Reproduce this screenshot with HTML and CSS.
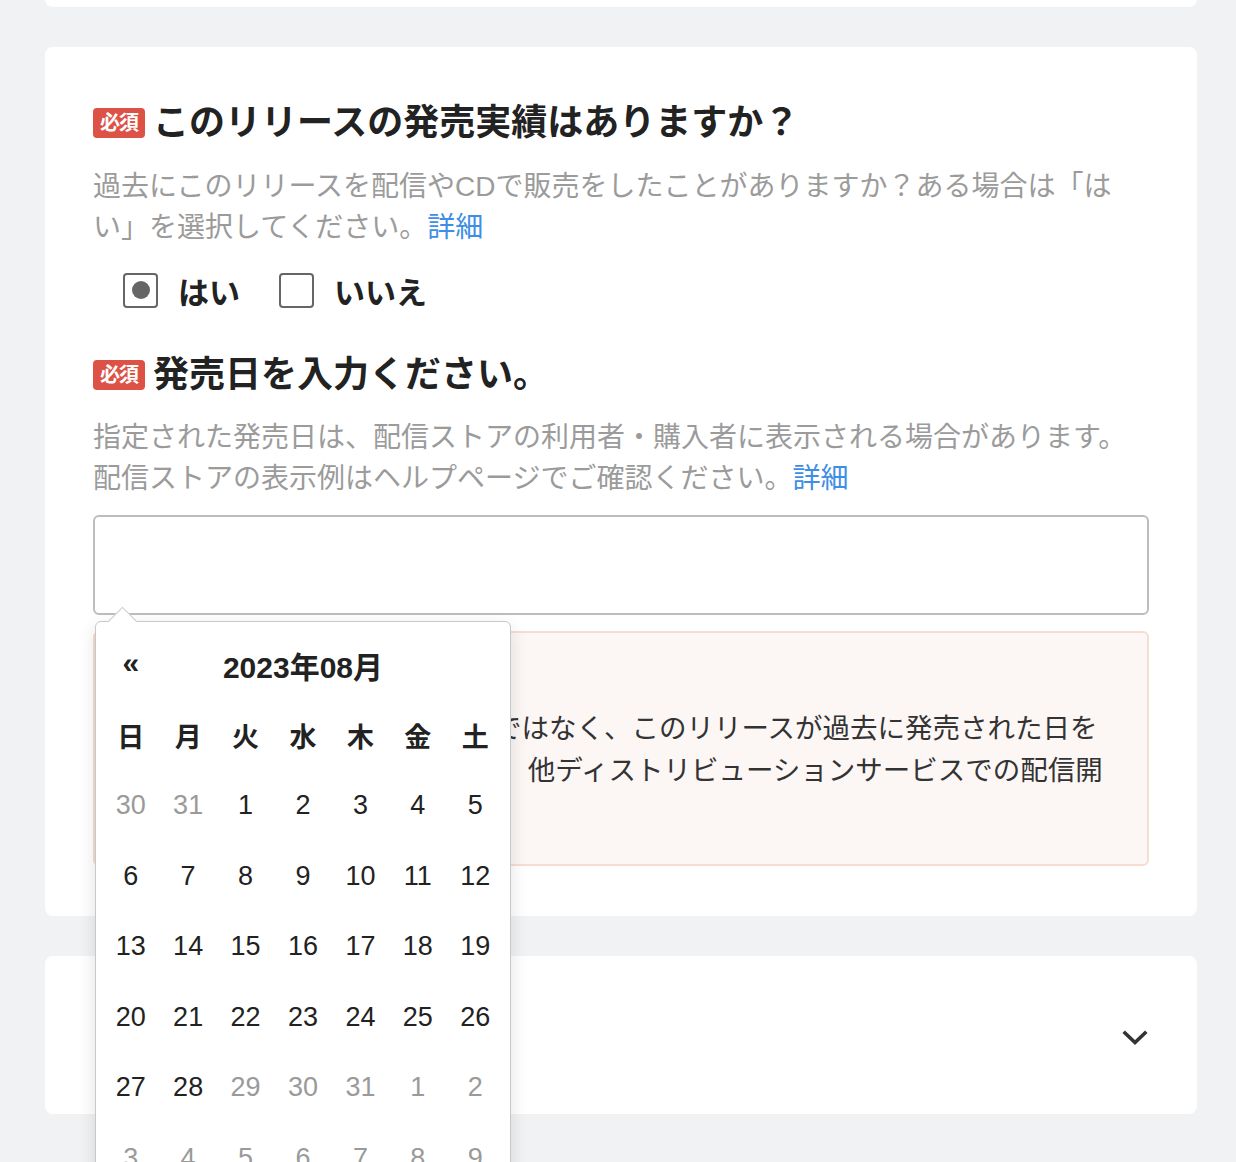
FILE: index.html
```html
<!DOCTYPE html>
<html lang="ja">
<head>
    <meta charset="UTF-8">
    <title>リリース情報</title>
    <link rel="stylesheet" href="styles.css">
</head>
<body>

    <div class="page">
        <div class="card card-prev"></div>

        <!-- 発売実績 -->
        <section class="card form-card">
            <h3 class="field-title"><span class="badge">必須</span>このリリースの発売実績はありますか？</h3>
            <p class="field-desc">過去にこのリリースを配信やCDで販売をしたことがありますか？ある場合は「はい」を選択してください。<a href="#">詳細</a></p>

            <div class="choices">
                <label class="choice"><span class="box checked"></span>はい</label>
                <label class="choice"><span class="box"></span>いいえ</label>
            </div>

            <h3 class="field-title title-date"><span class="badge">必須</span>発売日を入力ください。</h3>
            <p class="field-desc desc-date">指定された発売日は、配信ストアの利用者・購入者に表示される場合があります。<br>配信ストアの表示例はヘルプページでご確認ください。<a href="#">詳細</a></p>

            <div class="date-wrap">
                <input class="date-input" type="text">

                <div class="datepicker">
                    <div class="dp-head">
                        <span class="dp-prev">«</span>
                        <span class="dp-title">2023年08月</span>
                        <span></span>
                    </div>
                    <div class="dp-grid">
                        <span class="dow">日</span><span class="dow">月</span><span class="dow">火</span><span class="dow">水</span><span class="dow">木</span><span class="dow">金</span><span class="dow">土</span>

                        <span class="day old">30</span><span class="day old">31</span><span class="day">1</span><span class="day">2</span><span class="day">3</span><span class="day">4</span><span class="day">5</span>
                        <span class="day">6</span><span class="day">7</span><span class="day">8</span><span class="day">9</span><span class="day">10</span><span class="day">11</span><span class="day">12</span>
                        <span class="day">13</span><span class="day">14</span><span class="day">15</span><span class="day">16</span><span class="day">17</span><span class="day">18</span><span class="day">19</span>
                        <span class="day">20</span><span class="day">21</span><span class="day">22</span><span class="day">23</span><span class="day">24</span><span class="day">25</span><span class="day">26</span>
                        <span class="day">27</span><span class="day">28</span><span class="day old">29</span><span class="day old">30</span><span class="day old">31</span><span class="day old">1</span><span class="day old">2</span>
                        <span class="day old">3</span><span class="day old">4</span><span class="day old">5</span><span class="day old">6</span><span class="day old">7</span><span class="day old">8</span><span class="day old">9</span>
                    </div>
                </div>
            </div>

            <div class="notice">
                <p class="notice-title">ご注意ください</p>
                <p class="notice-text">この欄には配信開始日や予約日ではなく、このリリースが過去に発売された日を正確に入力してください。また、他ディストリビューションサービスでの配信開始日も入力しないでください。</p>
            </div>
        </section>

        <!-- 折りたたみ -->
        <section class="card collapse-card">
            <svg class="chevron" width="26" height="16" viewBox="0 0 26 16">
                <polyline points="3,3 13,12.5 23,3" fill="none" stroke="#333" stroke-width="3.6" stroke-linecap="square"/>
            </svg>
        </section>
    </div>

</body>
</html>
```

FILE: styles.css
```css
/* 全体 */
body {
    margin: 0;
    background-color: #f1f2f4;
    font-family: "Liberation Sans", "Noto Sans CJK JP", sans-serif;
    color: #222;
}

.page {
    width: 1152px;
    margin-left: 45px;
    padding-bottom: 160px;
    display: flex;
    flex-direction: column;
    gap: 40px;
}

/* カード */
.card {
    background-color: #fff;
    border-radius: 8px;
}

.card-prev {
    height: 40px;
    margin-top: -33px;
}

.form-card {
    padding: 60px 48px 50px;
}

/* 見出し */
.field-title {
    display: flex;
    align-items: center;
    height: 32px;
    margin: 0;
    font-size: 36px;
    line-height: 32px;
    font-weight: bold;
    color: #222;
}

.title-date {
    margin-top: 49px;
}

.badge {
    display: inline-flex;
    align-items: center;
    justify-content: center;
    flex-shrink: 0;
    width: 52px;
    height: 30px;
    margin-right: 8px;
    background-color: #dc5247;
    border-radius: 4px;
    color: #fff;
    font-size: 20px;
    line-height: 30px;
    font-weight: bold;
    letter-spacing: -1px;
}

/* 説明文 */
.field-desc {
    margin: 27px 0 0;
    font-size: 28px;
    line-height: 41px;
    color: #9b9b9b;
}

.desc-date {
    margin-top: 26px;
}

.field-desc a {
    color: #3e8ee6;
    text-decoration: none;
}

/* 選択肢 */
.choices {
    display: flex;
    align-items: center;
    gap: 39px;
    height: 40px;
    margin-top: 22px;
    padding-left: 30px;
}

.choice {
    display: flex;
    align-items: center;
    gap: 20px;
    font-size: 31px;
    font-weight: bold;
    color: #222;
}

.box {
    position: relative;
    width: 35px;
    height: 35px;
    box-sizing: border-box;
    border: 2px solid #666;
    border-radius: 4px;
}

.box.checked::after {
    content: "";
    position: absolute;
    left: 6.5px;
    top: 6.5px;
    width: 18px;
    height: 18px;
    border-radius: 50%;
    background-color: #666;
}

/* 日付入力 */
.date-wrap {
    position: relative;
    margin-top: 16px;
}

.date-input {
    display: block;
    width: 100%;
    height: 100px;
    box-sizing: border-box;
    border: 2px solid #bdbdbd;
    border-radius: 6px;
    background-color: #fff;
}

/* カレンダー */
.datepicker {
    position: absolute;
    left: 2px;
    top: 106px;
    z-index: 10;
    width: 416px;
    box-sizing: border-box;
    padding: 8px 6px 0;
    background-color: #fff;
    border: 1px solid #c8c8c8;
    border-radius: 6px;
    box-shadow: 0 6px 18px rgba(0, 0, 0, 0.12);
}

.datepicker::before {
    content: "";
    position: absolute;
    left: 16px;
    top: -11px;
    width: 20px;
    height: 20px;
    background-color: #fff;
    border-top: 1px solid #c8c8c8;
    border-left: 1px solid #c8c8c8;
    transform: rotate(45deg);
}

.dp-head {
    display: grid;
    grid-template-columns: 57.7px 1fr 57.7px;
    align-items: center;
    height: 70px;
}

.dp-prev {
    text-align: center;
    font-size: 30px;
    font-weight: bold;
    line-height: 1;
    padding-bottom: 4px;
}

.dp-title {
    text-align: center;
    font-size: 30px;
    font-weight: bold;
}

.dp-grid {
    display: grid;
    grid-template-columns: repeat(7, 1fr);
    grid-auto-rows: 70.5px;
    align-items: center;
    text-align: center;
}

.dow {
    font-size: 27px;
    font-weight: bold;
    color: #222;
}

.day {
    font-size: 27px;
    color: #222;
}

.day.old {
    color: #9a9a9a;
}

/* 注意ボックス */
.notice {
    margin-top: 16px;
    height: 235px;
    box-sizing: border-box;
    padding: 33px 22px 29px;
    background-color: #fcf7f5;
    border: 2px solid #f6ddd1;
    border-radius: 6px;
    font-size: 27.5px;
    line-height: 42px;
    color: #333;
}

.notice p {
    margin: 0;
}

.notice-title {
    font-weight: bold;
}

.notice-text {
    text-indent: -8px;
}

/* 折りたたみカード */
.collapse-card {
    height: 158px;
    display: flex;
    align-items: center;
    justify-content: flex-end;
    padding-right: 49px;
}

.chevron {
    margin-top: 6px;
}
```
